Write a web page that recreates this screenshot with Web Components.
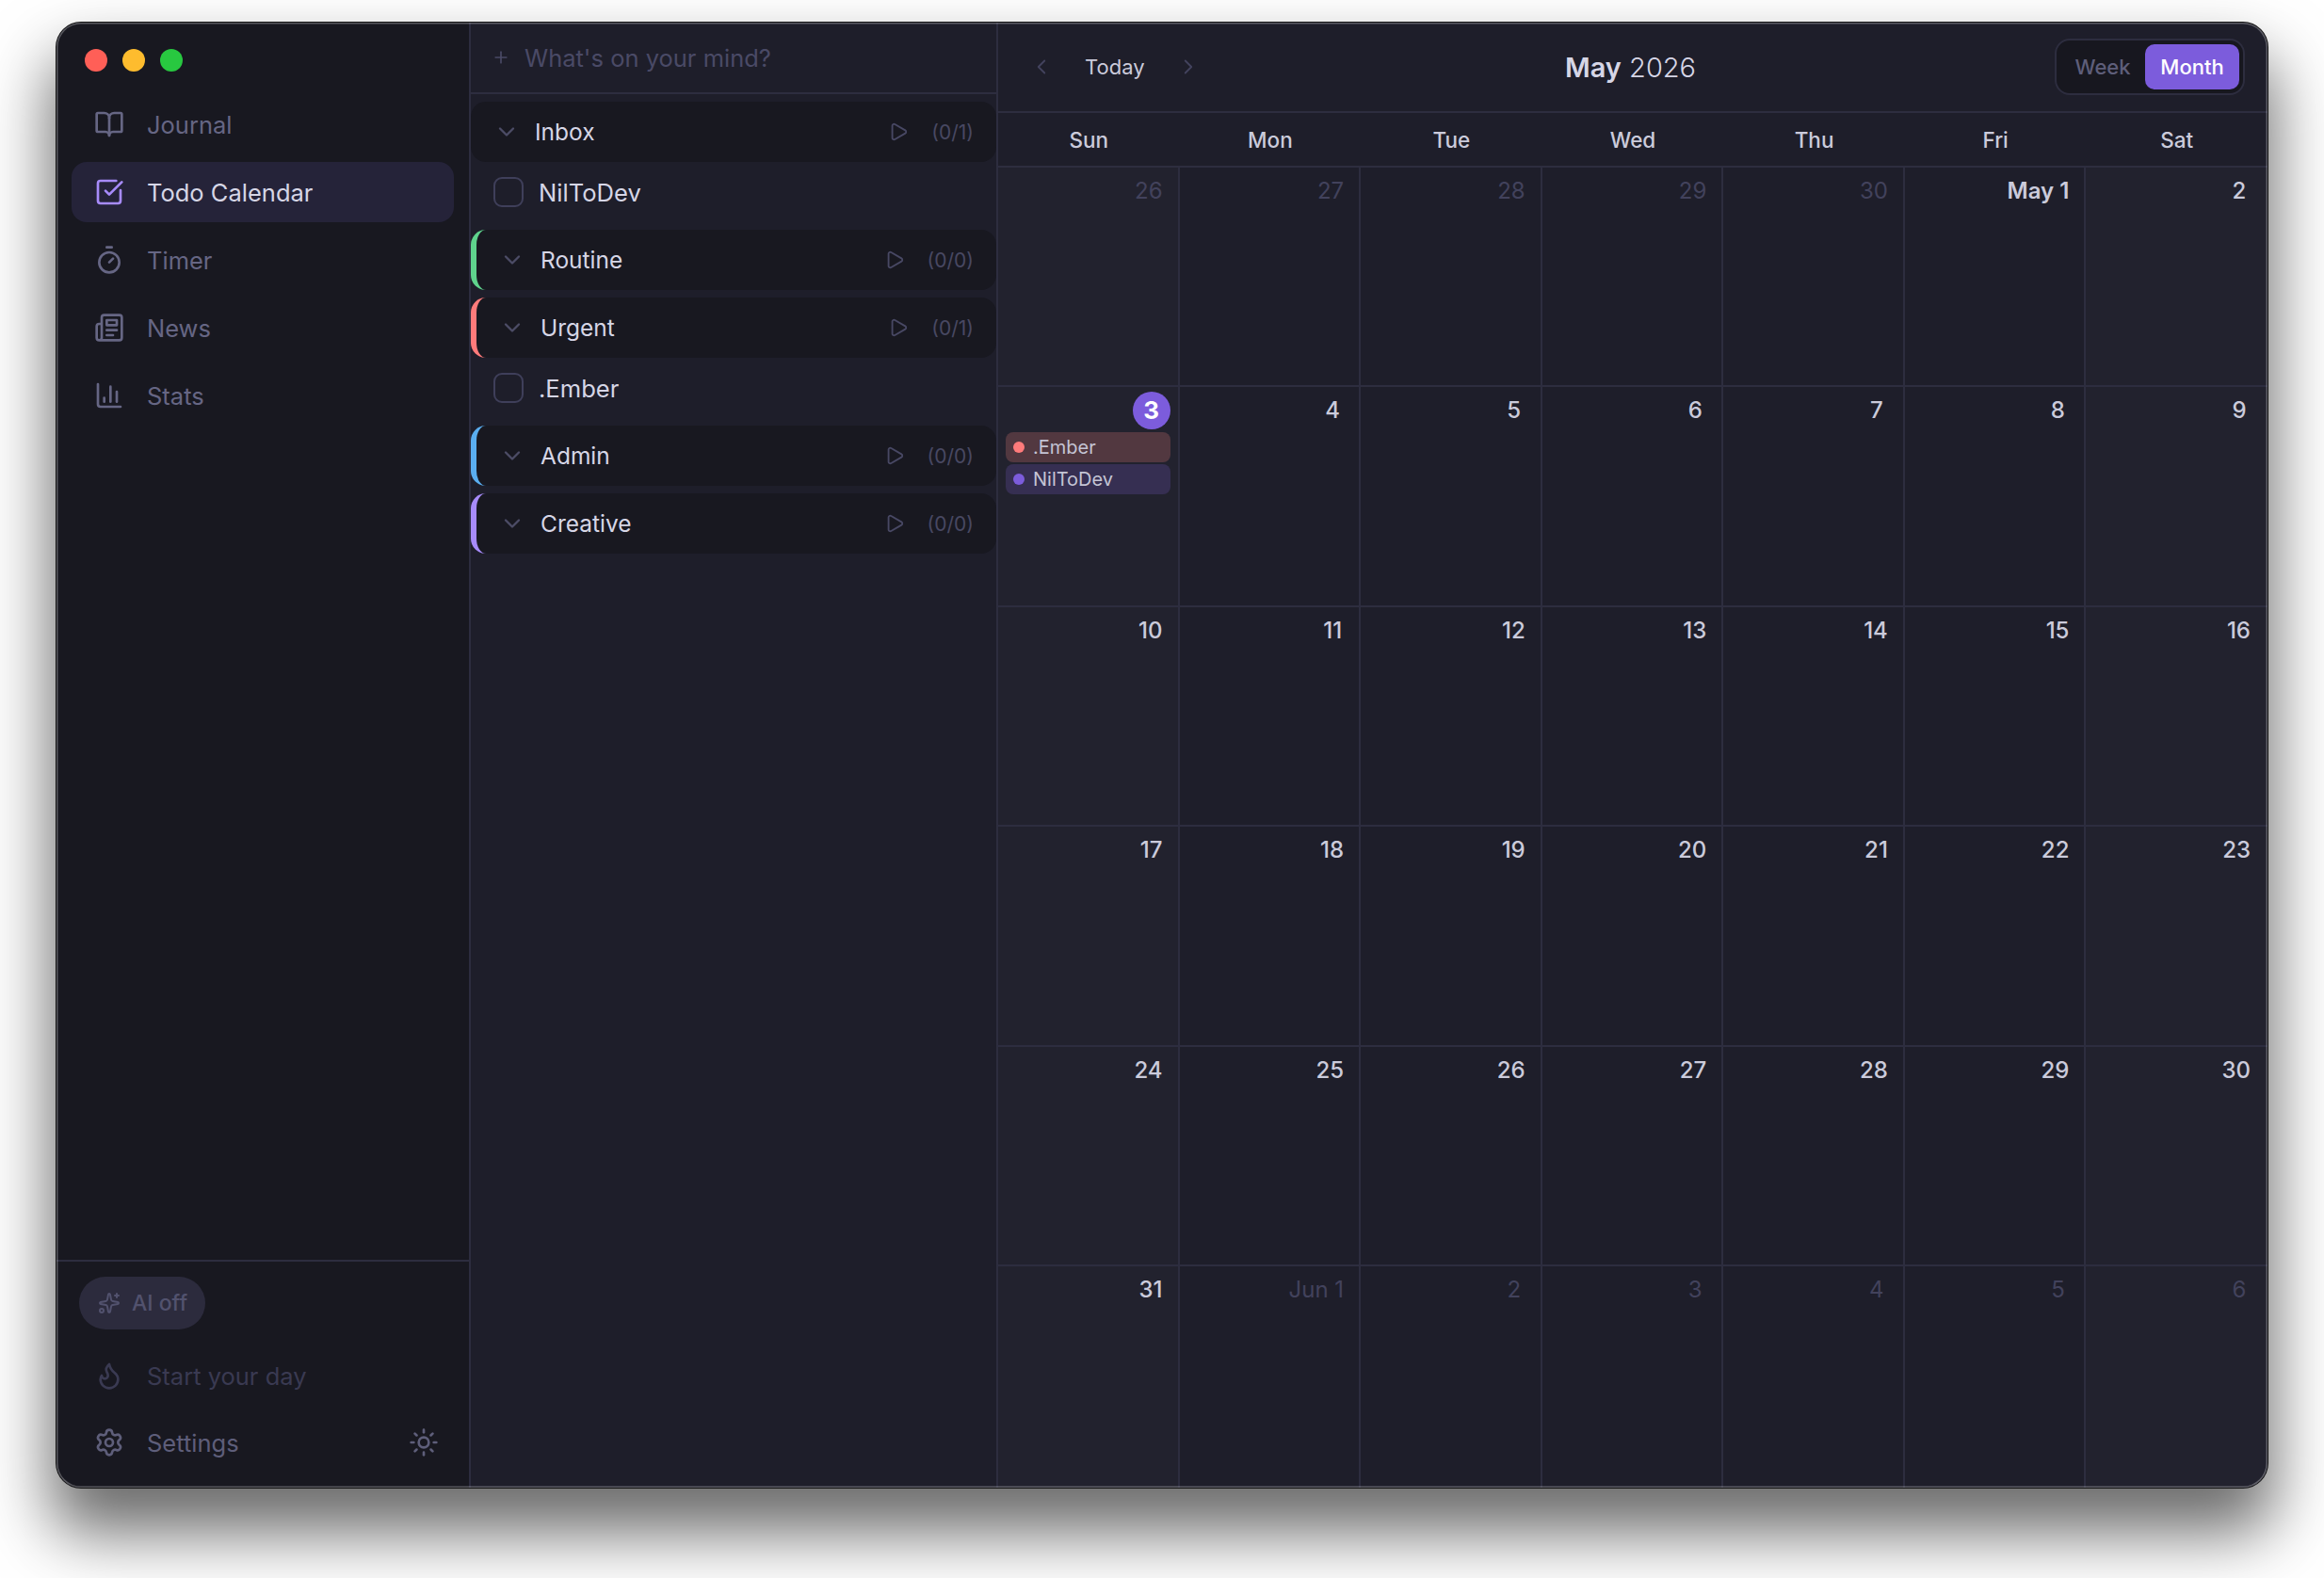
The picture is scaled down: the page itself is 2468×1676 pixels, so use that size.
<!DOCTYPE html>
<html>
<head>
<meta charset="utf-8">
<title>Todo Calendar</title>
<style>
    html, body { margin: 0; padding: 0; background: #fff; }
    body { width: 2468px; height: 1676px; overflow: hidden; font-family: Inter, "Liberation Sans", sans-serif; }
</style>
</head>
<body>

<app-window>
    <side-bar slot="sidebar"></side-bar>
    <task-panel slot="tasks">
        <task-group name="Inbox" count="(0/1)" plain>
            <task-row>NilToDev</task-row>
        </task-group>
        <task-group name="Routine" count="(0/0)" color="#5fd38d"></task-group>
        <task-group name="Urgent" count="(0/1)" color="#ff7b7b">
            <task-row>.Ember</task-row>
        </task-group>
        <task-group name="Admin" count="(0/0)" color="#5aaef0"></task-group>
        <task-group name="Creative" count="(0/0)" color="#a78bfa"></task-group>
    </task-panel>
    <month-view slot="calendar"></month-view>
</app-window>

<script>
const ICONS = {
    book: `<path d="M12 7v14"/><path d="M3 18a1 1 0 0 1-1-1V4a1 1 0 0 1 1-1h5a4 4 0 0 1 4 4 4 4 0 0 1 4-4h5a1 1 0 0 1 1 1v13a1 1 0 0 1-1 1h-6a3 3 0 0 0-3 3 3 3 0 0 0-3-3z"/>`,
    check: `<path d="M21 10.5V19a2 2 0 0 1-2 2H5a2 2 0 0 1-2-2V5a2 2 0 0 1 2-2h12.5"/><path d="m9 11 3 3L22 4"/>`,
    timer: `<line x1="10" x2="14" y1="2" y2="2"/><line x1="12" x2="15" y1="14" y2="11"/><circle cx="12" cy="14" r="8"/>`,
    news: `<path d="M4 22h16a2 2 0 0 0 2-2V4a2 2 0 0 0-2-2H8a2 2 0 0 0-2 2v16a2 2 0 0 1-2 2Zm0 0a2 2 0 0 1-2-2v-9c0-1.1.9-2 2-2h2"/><path d="M18 14h-8"/><path d="M15 18h-5"/><path d="M10 6h8v4h-8V6Z"/>`,
    chart: `<path d="M3 3v16a2 2 0 0 0 2 2h16"/><path d="M18 17V9"/><path d="M13 17V5"/><path d="M8 17v-3"/>`,
    sparkles: `<path d="M11.017 2.814a1 1 0 0 1 1.966 0l1.051 5.558a2 2 0 0 0 1.594 1.594l5.558 1.051a1 1 0 0 1 0 1.966l-5.558 1.051a2 2 0 0 0-1.594 1.594l-1.051 5.558a1 1 0 0 1-1.966 0l-1.051-5.558a2 2 0 0 0-1.594-1.594l-5.558-1.051a1 1 0 0 1 0-1.966l5.558-1.051a2 2 0 0 0 1.594-1.594z"/><path d="M20 2v4"/><path d="M22 4h-4"/><circle cx="4" cy="20" r="2"/>`,
    flame: `<path d="M8.5 14.5A2.5 2.5 0 0 0 11 12c0-1.38-.5-2-1-3-1.072-2.143-.224-4.054 2-6 .5 2.5 2 4.9 4 6.5 2 1.6 3 3.5 3 5.5a7 7 0 1 1-14 0c0-1.153.433-2.294 1-3a2.5 2.5 0 0 0 2.5 2.5z"/>`,
    settings: `<path d="M9.671 4.136a2.34 2.34 0 0 1 4.659 0 2.34 2.34 0 0 0 3.319 1.915 2.34 2.34 0 0 1 2.33 4.033 2.34 2.34 0 0 0 0 3.831 2.34 2.34 0 0 1-2.33 4.033 2.34 2.34 0 0 0-3.319 1.915 2.34 2.34 0 0 1-4.659 0 2.34 2.34 0 0 0-3.32-1.915 2.34 2.34 0 0 1-2.33-4.033 2.34 2.34 0 0 0 0-3.831A2.34 2.34 0 0 1 6.35 6.051a2.34 2.34 0 0 0 3.319-1.915"/><circle cx="12" cy="12" r="3"/>`,
    sun: `<circle cx="12" cy="12" r="4"/><path d="M12 2v2"/><path d="M12 20v2"/><path d="m4.93 4.93 1.41 1.41"/><path d="m17.66 17.66 1.41 1.41"/><path d="M2 12h2"/><path d="M20 12h2"/><path d="m6.34 17.66-1.41 1.41"/><path d="m19.07 4.93-1.41 1.41"/>`,
    down: `<path d="m6 9 6 6 6-6"/>`,
    left: `<path d="m15 18-6-6 6-6"/>`,
    right: `<path d="m9 18 6-6-6-6"/>`,
    play: `<path d="M5 5a2 2 0 0 1 3.008-1.728l11.997 6.998a2 2 0 0 1 .003 3.458l-12 7A2 2 0 0 1 5 19z"/>`,
    plus: `<path d="M5 12h14"/><path d="M12 5v14"/>`
};

class LuIcon extends HTMLElement {
    constructor() {
        super();
        this.attachShadow({mode: "open"});
    }

    connectedCallback() {
        const size = this.getAttribute("size") || 32;
        const stroke = this.getAttribute("stroke") || 2;
        this.shadowRoot.innerHTML = `
            <style>
                :host { display: block; flex: none; width: ${size}px; height: ${size}px; color: inherit; }
                svg { display: block; width: 100%; height: 100%; fill: none; stroke: currentColor; stroke-width: ${stroke}; stroke-linecap: round; stroke-linejoin: round; }
            </style>
            <svg viewBox="0 0 24 24">${ICONS[this.getAttribute("name")]}</svg>
        `;
    }
}

class AppWindow extends HTMLElement {
    constructor() {
        super();
        this.attachShadow({mode: "open"});
    }

    connectedCallback() {
        this.shadowRoot.innerHTML = `
            <style>
                :host {
                    display: grid;
                    grid-template-columns: 440px 560px 1fr;
                    position: relative;
                    width: 2348px;
                    height: 1556px;
                    margin: 24px 60px;
                    border-radius: 26px;
                    background: #1e1e2a;
                    box-shadow: 0 0 0 1px #111, 0 42px 68px 6px rgba(0,0,0,.58);
                }
                #edge {
                    position: absolute;
                    inset: 0;
                    border-radius: 26px;
                    pointer-events: none;
                    box-shadow: inset 0 0 0 1.5px rgba(255,255,255,.28);
                }
                ::slotted(*) { min-width: 0; min-height: 0; }
            </style>
            <slot name="sidebar"></slot>
            <slot name="tasks"></slot>
            <slot name="calendar"></slot>
            <div id="edge"></div>
        `;
    }
}

class SideItem extends HTMLElement {
    constructor() {
        super();
        this.attachShadow({mode: "open"});
    }

    connectedCallback() {
        this.shadowRoot.innerHTML = `
            <style>
                :host {
                    display: flex;
                    align-items: center;
                    gap: 24px;
                    height: 64px;
                    padding: 0 24px;
                    border-radius: 16px;
                    color: var(--item-color, #666684);
                    font-size: 25.5px;
                }
                :host([active]) { background: #252339; color: #d6d6e6; }
                :host([active]) lu-icon { color: #a78bfa; }
                #end { margin-left: auto; margin-right: -8px; }
            </style>
            <lu-icon name="${this.getAttribute("icon")}" size="32" stroke="2"></lu-icon>
            <span><slot></slot></span>
            ${this.hasAttribute("end") ? `<lu-icon id="end" name="${this.getAttribute("end")}" size="32" stroke="2"></lu-icon>` : ""}
        `;
    }
}

class SideBar extends HTMLElement {
    constructor() {
        super();
        this.attachShadow({mode: "open"});
    }

    connectedCallback() {
        this.shadowRoot.innerHTML = `
            <style>
                :host {
                    display: flex;
                    flex-direction: column;
                    height: 1556px;
                    background: #181820;
                    border-right: 2px solid #2d2d3f;
                    border-radius: 26px 0 0 26px;
                    box-sizing: border-box;
                    width: 440px;
                }
                #lights { display: flex; gap: 16px; padding: 28px 0 0 30px; height: 76px; box-sizing: border-box; flex: none; }
                #lights i { width: 24px; height: 24px; border-radius: 50%; }
                nav { display: flex; flex-direction: column; gap: 8px; padding: 0 16px; flex: 1; }
                footer {
                    display: flex;
                    flex-direction: column;
                    padding: 16px 16px 16px;
                    border-top: 2px solid #2d2d3f;
                }
                #ai {
                    display: flex;
                    align-items: center;
                    gap: 12px;
                    width: 134px;
                    height: 56px;
                    margin: 0 0 17px 8px;
                    padding-left: 20px;
                    box-sizing: border-box;
                    border-radius: 28px;
                    background: #2c2b3d;
                    color: #52526e;
                    font-size: 23px;
                    font-weight: 500;
                }
                #day { --item-color: #3a3a52; margin-bottom: 7px; }
                #set { --item-color: #5e5e7a; }
            </style>
            <div id="lights">
                <i style="background:#ff5f57"></i>
                <i style="background:#febc2e"></i>
                <i style="background:#28c840"></i>
            </div>
            <nav>
                <side-item icon="book">Journal</side-item>
                <side-item icon="check" active>Todo Calendar</side-item>
                <side-item icon="timer">Timer</side-item>
                <side-item icon="news">News</side-item>
                <side-item icon="chart">Stats</side-item>
            </nav>
            <footer>
                <div id="ai"><lu-icon name="sparkles" size="24"></lu-icon><span>AI off</span></div>
                <side-item id="day" icon="flame">Start your day</side-item>
                <side-item id="set" icon="settings" end="sun">Settings</side-item>
            </footer>
        `;
    }
}

class TaskPanel extends HTMLElement {
    constructor() {
        super();
        this.attachShadow({mode: "open"});
    }

    connectedCallback() {
        this.shadowRoot.innerHTML = `
            <style>
                :host {
                    display: flex;
                    flex-direction: column;
                    border-right: 2px solid #2d2d3f;
                    box-sizing: border-box;
                    color: #d6d6e6;
                }
                #add {
                    display: flex;
                    align-items: center;
                    gap: 15px;
                    height: 74px;
                    padding: 0 0 0 22px;
                    border-bottom: 2px solid #2d2d3f;
                    color: #4a4a66;
                    font-size: 25.5px;
                    flex: none;
                }
                #list { display: flex; flex-direction: column; gap: 8px; padding-top: 8px; }
            </style>
            <div id="add"><lu-icon name="plus" size="20"></lu-icon><span>What's on your mind?</span></div>
            <div id="list"><slot></slot></div>
        `;
    }
}

class TaskGroup extends HTMLElement {
    constructor() {
        super();
        this.attachShadow({mode: "open"});
    }

    connectedCallback() {
        const color = this.getAttribute("color");
        this.shadowRoot.innerHTML = `
            <style>
                :host { display: flex; flex-direction: column; gap: 0; }
                #head {
                    display: flex;
                    align-items: center;
                    height: 64px;
                    padding: 0 24px 0 24px;
                    border-radius: 16px;
                    background: #181820;
                    font-size: 24.5px;
                    font-weight: 400;
                    color: #d6d6e6;
                    ${color ? `border-left: 6px solid ${color};` : ""}
                    box-sizing: border-box;
                }
                #chev { color: #4c4c66; margin-right: 16px; }
                #play { color: #484864; margin-left: auto; margin-right: 24px; }
                #count { color: #484862; font-size: 21px; }
            </style>
            <div id="head">
                <lu-icon id="chev" name="down" size="28" stroke="2"></lu-icon>
                <span>${this.getAttribute("name")}</span>
                <lu-icon id="play" name="play" size="22" stroke="2"></lu-icon>
                <span id="count">${this.getAttribute("count")}</span>
            </div>
            <slot></slot>
        `;
    }
}

class TaskRow extends HTMLElement {
    constructor() {
        super();
        this.attachShadow({mode: "open"});
    }

    connectedCallback() {
        this.shadowRoot.innerHTML = `
            <style>
                :host {
                    display: flex;
                    align-items: center;
                    gap: 16px;
                    height: 64px;
                    padding-left: 24px;
                    font-size: 25.6px;
                    color: #d6d6e6;
                }
                i { display: block; width: 32px; height: 32px; box-sizing: border-box; border: 2.5px solid #3f3f5a; border-radius: 9px; flex: none; }
            </style>
            <i></i><span><slot></slot></span>
        `;
    }
}

class CalEvent extends HTMLElement {
    constructor() {
        super();
        this.attachShadow({mode: "open"});
    }

    connectedCallback() {
        const tone = this.getAttribute("tone");
        this.shadowRoot.innerHTML = `
            <style>
                :host {
                    display: flex;
                    align-items: center;
                    gap: 9px;
                    height: 32px;
                    padding-left: 8px;
                    border-radius: 8px;
                    background: ${this.getAttribute("bg")};
                    color: #c4c4d4;
                    font-size: 20px;
                }
                i { width: 12px; height: 12px; border-radius: 50%; background: ${tone}; flex: none; }
            </style>
            <i></i><span><slot></slot></span>
        `;
    }
}

class CalDay extends HTMLElement {
    constructor() {
        super();
        this.attachShadow({mode: "open"});
    }

    connectedCallback() {
        this.shadowRoot.innerHTML = `
            <style>
                :host {
                    display: flex;
                    flex-direction: column;
                    min-width: 0;
                    box-sizing: border-box;
                    border-top: 2px solid #2d2d3f;
                    border-right: 2px solid #2d2d3f;
                    padding: 5px 8px 0 8px;
                    background: #1e1e2a;
                }
                :host([weekend]) { background: #22222e; }
                :host([last]) { border-right: 0; padding-right: 10px; }
                #num {
                    align-self: flex-end;
                    min-width: 40px;
                    height: 40px;
                    line-height: 40px;
                    padding: 0 8px;
                    box-sizing: border-box;
                    border-radius: 20px;
                    text-align: center;
                    font-size: 24px;
                    font-weight: 450;
                    color: #cbcbdb;
                }
                :host([month-start]) #num { font-weight: 600; }
                :host([other]) #num { color: #42425c; font-weight: 400; }
                :host([today]) #num { background: #7c5cdc; color: #fff; font-weight: 700; font-size: 26px; padding: 0; }
                #events { display: flex; flex-direction: column; gap: 2px; margin-top: 3px; }
            </style>
            <span id="num">${this.getAttribute("label")}</span>
            <div id="events"><slot></slot></div>
        `;
    }
}

class ViewSwitch extends HTMLElement {
    constructor() {
        super();
        this.attachShadow({mode: "open"});
    }

    connectedCallback() {
        this.shadowRoot.innerHTML = `
            <style>
                :host {
                    display: flex;
                    height: 60px;
                    padding: 4px;
                    box-sizing: border-box;
                    border: 2px solid #2d2d3f;
                    border-radius: 16px;
                    background: #17171f;
                    font-size: 22px;
                    font-weight: 500;
                }
                span { display: flex; align-items: center; justify-content: center; border-radius: 10px; }
                #week { width: 90px; color: #5e5e7a; }
                #month { width: 100px; background: #7c5cdc; color: #fff; }
            </style>
            <span id="week">Week</span>
            <span id="month">Month</span>
        `;
    }
}

class MonthView extends HTMLElement {
    constructor() {
        super();
        this.attachShadow({mode: "open"});
    }

    connectedCallback() {
        // 42 cells: Apr 26 to Jun 6
        const cells = [];
        for (let i = 0; i < 42; i++) {
            const date = new Date(2026, 3, 26 + i, 12);
            const month = date.getMonth();
            const num = date.getDate();
            let label = String(num);
            if (num === 1)
                label = (month === 4 ? "May 1" : "Jun 1");
            let attrs = `label="${label}"`;
            if (month !== 4) attrs += " other";
            if (num === 1 && month === 4) attrs += " month-start";
            if (date.getDay() === 0 || date.getDay() === 6) attrs += " weekend";
            if (date.getDay() === 6) attrs += " last";
            let events = "";
            if (month === 4 && num === 3) {
                attrs += " today";
                events = `<cal-event tone="#ff7b7b" bg="#523840">.Ember</cal-event>
                          <cal-event tone="#7c5cdc" bg="#362f52">NilToDev</cal-event>`;
            }
            cells.push(`<cal-day ${attrs}>${events}</cal-day>`);
        }

        const names = ["Sun", "Mon", "Tue", "Wed", "Thu", "Fri", "Sat"];

        this.shadowRoot.innerHTML = `
            <style>
                :host {
                    display: flex;
                    flex-direction: column;
                    height: 1556px;
                    color: #d6d6e6;
                    overflow: hidden;
                    border-radius: 0 26px 26px 0;
                }
                header {
                    display: grid;
                    grid-template-columns: 1fr auto 1fr;
                    align-items: center;
                    height: 94px;
                    padding: 0 24px 0 33px;
                    border-bottom: 2px solid #2d2d3f;
                    flex: none;
                }
                #nav { display: flex; align-items: center; gap: 33px; color: #43435e; }
                #nav span { color: #cbcbdb; font-size: 22px; font-weight: 400; }
                #title { font-size: 29px; font-weight: 300; color: #d6d6e6; margin-right: 14px; }
                #title b { font-weight: 600; }
                #switch { justify-self: end; }
                #names { display: grid; grid-template-columns: repeat(7, 1fr); height: 56px; align-items: center; flex: none; }
                #names span { text-align: center; font-size: 22.5px; font-weight: 500; color: #cbcbdb; }
                #grid { flex: 1; display: grid; grid-template-columns: repeat(7, 1fr); grid-template-rows: repeat(5, 233.4px) 1fr; min-height: 0; }
            </style>
            <header>
                <div id="nav">
                    <lu-icon name="left" size="26" stroke="1.7"></lu-icon>
                    <span>Today</span>
                    <lu-icon name="right" size="26" stroke="1.7"></lu-icon>
                </div>
                <div id="title"><b>May</b> 2026</div>
                <view-switch id="switch"></view-switch>
            </header>
            <div id="names">${names.map(n => `<span>${n}</span>`).join("")}</div>
            <div id="grid">${cells.join("")}</div>
        `;
    }
}

customElements.define("lu-icon", LuIcon);
customElements.define("app-window", AppWindow);
customElements.define("side-item", SideItem);
customElements.define("side-bar", SideBar);
customElements.define("task-panel", TaskPanel);
customElements.define("task-group", TaskGroup);
customElements.define("task-row", TaskRow);
customElements.define("cal-event", CalEvent);
customElements.define("cal-day", CalDay);
customElements.define("view-switch", ViewSwitch);
customElements.define("month-view", MonthView);
</script>
</body>
</html>
